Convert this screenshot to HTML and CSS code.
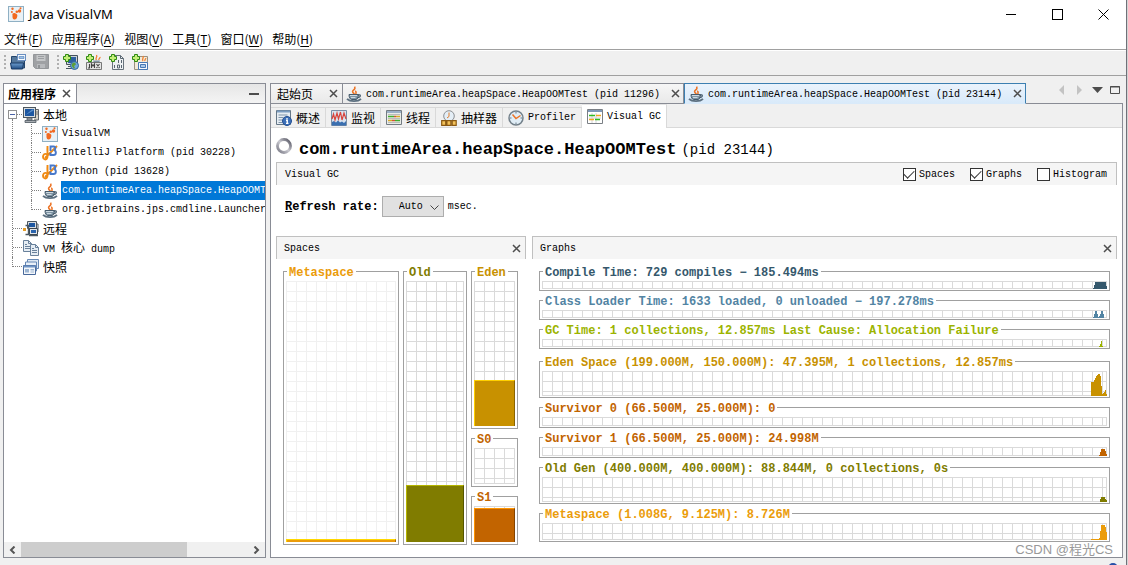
FILE: index.html
```html
<!DOCTYPE html>
<html lang="zh-CN">
<head>
<meta charset="utf-8">
<title>Java VisualVM</title>
<link rel="stylesheet" href="styles.css">
</head>
<body>
<svg class="defs" aria-hidden="true">
  <defs>
    <linearGradient id="g-blue" x1="0" y1="0" x2="0" y2="1"><stop offset="0" stop-color="#6f9fd0"/><stop offset="1" stop-color="#1f4b82"/></linearGradient>
    <linearGradient id="g-ring" x1="1" y1="0" x2="0" y2="1"><stop offset="0" stop-color="#4f4f5c"/><stop offset=".5" stop-color="#c9c9d0"/><stop offset="1" stop-color="#777783"/></linearGradient>
  </defs>
  <symbol id="i-vm" viewBox="0 0 16 16"><rect x=".5" y=".5" width="15" height="15" fill="#e9f1f6" stroke="#8fb0c4"/><g fill="#f26a21"><path d="M4.500 9.500C4 7.500 5.500 6.800 7 7.200c2 .3 2.800 1.800 2.200 3.600-.2 1.800-1.500 3-3 2.700-1.800-.3-1.800-2.200-1.700-4z"/><circle cx="4.500" cy="2.800" r="1.200"/><circle cx="3.900" cy="6" r="1"/><circle cx="8.800" cy="5.800" r="1.300"/><circle cx="11.500" cy="5" r="1.700"/><circle cx="12.500" cy="2.300" r="1"/></g></symbol>
  <symbol id="i-java" viewBox="0 0 16 16"><path d="M8.500 8C5 5.500 7 4.500 8.500 3.200 9.200 2.500 9 1.500 8.600.6M9.500 8c1.800-1.500-.5-2 .5-3.300" fill="none" stroke="#ec7426" stroke-width="1.600"/><path d="M3 8.500h9.500c0 3-1 4.500-2.500 5H5.500c-1.500-.5-2.500-2-2.500-5z" fill="#7f94a4" stroke="#465b6c"/><path d="M4 9.500h7M5 11.500h4.500" stroke="#cbd8e0"/><path d="M12 9c3-1 3.500 2-.8 3" fill="none" stroke="#465b6c" stroke-width="1.200"/><path d="M1 12.800c3 3 11 3 14 0" fill="none" stroke="#5c7080" stroke-width="1.800"/></symbol>
  <symbol id="i-jb" viewBox="0 0 16 16"><path d="M5.500 1v8M5.500 9.500c-3-1.500-4.500 0-4.500 2.500s3.500 3.500 4.300.8S5 6 5.500 2M3 13L15 1" fill="none" stroke="#f08a12" stroke-width="1.900"/><path d="M8.500 6V1.500h3c2.500 0 2.500 3.300.3 3.600 2.800.4 2.800 4.900-.3 4.900H8.500V7.500" fill="none" stroke="#4778ca" stroke-width="1.900"/></symbol>
  <symbol id="i-pc" viewBox="0 0 16 16"><path d="M10 2.500h5.500v10.500H11" fill="#d8d3c8" stroke="#62676c"/><path d="M12.500 5H15M12.500 7H15" stroke="#777"/><rect x=".5" y=".5" width="12" height="10" fill="#d8dcdf" stroke="#4c5760"/><rect x="2" y="2" width="9" height="7" fill="#1d57a1"/><path d="M2.500 8L9 2.500h1.500v1z" fill="#5f92cb"/><path d="M4 11h5v2H4zM2 13.500h11v2H2z" fill="#a8adb2" stroke="#4c5760" stroke-width=".8"/></symbol>
  <symbol id="i-remote" viewBox="0 0 16 16"><path d="M4.500.5h9v7h-9z" fill="#d8dcdf" stroke="#4c5760"/><path d="M6 2h6v4H6z" fill="#1d57a1"/><path d="M6.500 7.500h8v6h-8z" fill="#e3e5e7" stroke="#39444e"/><path d="M8 9h5v3H8z" fill="#2a64ad"/><path d="M2.500 4.500h3v9h-3M6 14.500h9" fill="none" stroke="#4c5760" stroke-width="1.400"/><path d="M0 7h3v3H0z" fill="#e59d2a"/><path d="M13 3h2v8" fill="none" stroke="#4c5760"/></symbol>
  <symbol id="i-dump" viewBox="0 0 16 16"><path d="M.5.5h5l3 3v8h-8z" fill="#e6edf4" stroke="#69819b"/><path d="M5.500.500v3h3M2 4.500h2M2 6.500h5M2 8.500h5" fill="none" stroke="#69819b"/><path d="M7.500 4.500h5l3 3v8h-8z" fill="#e6edf4" stroke="#69819b"/><path d="M12.500 4.500v3h3M9 8.500h2M9 10.500h5M9 12.500h5" fill="none" stroke="#69819b"/></symbol>
  <symbol id="i-snap" viewBox="0 0 16 16"><path d="M4.500.5h11v9h-11z" fill="#dfe9f4" stroke="#6688b5"/><path d="M2.500 3h11v9h-11z" fill="#e9f0f8" stroke="#6688b5"/><path d="M.5 6.500h12v9H.5z" fill="#f4f7fb" stroke="#49699b"/><path d="M.5 7.500h12" stroke="#6f94c5" stroke-width="2"/><path d="M2 10h4v3.500H2zM7.500 10h3.500v1.500H7.500zM7.500 12.500H11v1H7.500z" fill="#9cb5d2"/></symbol>
  <symbol id="i-plus" viewBox="0 0 16 16"><path d="M2.500.5h3v2h2v3h-2v2h-3v-2h-2v-3h2z" fill="#c4ee78" stroke="#2e8a12"/></symbol>
  <symbol id="i-open" viewBox="0 0 16 16"><path d="M1.500 14V2.500h5l1 2h7V14z" fill="#55789c" stroke="#24456b"/><rect x="7.500" y=".5" width="8" height="6" fill="#f7fafd" stroke="#6a8ec0"/><path d="M9 2.500h5v2H9z" fill="#9cc0e8" stroke="#4778b4" stroke-width=".6"/><path d="M.5 9h13l-1 6H1.500z" fill="url(#g-blue)" stroke="#183a66"/></symbol>
  <symbol id="i-save" viewBox="0 0 16 16"><path d="M.5.5h15v14h-13l-2-2z" fill="#9fa1a4" stroke="#94979a"/><path d="M3.500 1h9v6h-9z" fill="#c5c7c9"/><path d="M5 2.500h6M5 4.500h6" stroke="#9b9ea1"/><path d="M4 10h8v4H4z" fill="#b8babd"/><path d="M5 11h2v3H5z" fill="#909396"/></symbol>
  <symbol id="i-addhost" viewBox="0 0 16 16"><path d="M3.500 1.500h11v9h-11zM5 12.500h6M3 14.500h7" fill="#cdd3d8" stroke="#45525d"/><path d="M5 3h8v6H5z" fill="#2c5f9f"/><circle cx="11.500" cy="11.500" r="4" fill="#6fa5da" stroke="#30639b"/><path d="M9.500 9l2.500-.5 1 2-2 1.500 1 2-1 .7-2.500-3z" fill="#5d9e39"/><use href="#i-plus"/></symbol>
  <symbol id="i-addjmx" viewBox="0 0 16 16"><path d="M10.500 6c-2-2 1.500-2.500 0-5M13 6c-1-1.500 1.500-1.500 1-3" fill="none" stroke="#ef8132" stroke-width="1.300"/><path d="M7 6.500h7c0 3-7 3-7 0z" fill="#8095a5"/><path d="M.5 8.500h15v7H.5z" fill="#e4e4e4" stroke="#777"/><path d="M3.500 10v4H2M5.500 14v-4l1.500 2 1.500-2v4M10.500 10l3 4M13.500 10l-3 4" fill="none" stroke="#444" stroke-width="1.100"/><use href="#i-plus"/></symbol>
  <symbol id="i-addcore" viewBox="0 0 16 16"><path d="M3.500 1.500h8l3 3v11h-11z" fill="#eef1f3" stroke="#68737c"/><path d="M11.500 1.500v3h3M9.500 6v3M5.500 11v3M12.500 6v3M8.500 11h2v3h-2zM12.500 11v3" fill="none" stroke="#586570"/><use href="#i-plus"/></symbol>
  <symbol id="i-addsnap" viewBox="0 0 16 16"><path d="M2.500 2.500h13v13h-13z" fill="#f2ead9" stroke="#9a9080"/><path d="M11 7c-1.500-2 1-2.500 0-5M13 7c-.8-1.500 1-1.500.7-3" fill="none" stroke="#ef8132" stroke-width="1.300"/><path d="M6.500 8.500h9v7h-9z" fill="#f7fafd" stroke="#4778b4"/><path d="M8.500 10.500h5v3h-5z" fill="#a9c8e9" stroke="#4778b4"/><use href="#i-plus"/></symbol>
  <symbol id="i-over" viewBox="0 0 16 16"><path d="M.5.5h14v14H.5z" fill="#e6ecf2" stroke="#657787"/><path d="M1 1.500h13" stroke="#7b9cc0" stroke-width="2"/><path d="M2.500 5h9M2.500 7.500h5M2.500 10h4M2.500 12.500h4" stroke="#7e94aa"/><circle cx="11" cy="11" r="4.500" fill="#3c6fb8" stroke="#244f91"/><path d="M11 8v1.500M10 10.500h1.300V13M10 13.300h2.500" fill="none" stroke="#fff" stroke-width="1.300"/></symbol>
  <symbol id="i-mon" viewBox="0 0 16 16"><path d="M.5.500h15v15H.5z" fill="#d8e3ef" stroke="#7b8fa6"/><path d="M1 15.500V12l2-1 2 1.500 2-2 2 2 2-1 2 1.500 2-2v4.500z" fill="#3a6fb0"/><path d="M1 9l1.500-5L4 10l2-7 1.500 6 2-7 1.500 8 2-7L15 9" fill="none" stroke="#d9443c" stroke-width="1.200"/></symbol>
  <symbol id="i-thr" viewBox="0 0 16 16"><path d="M.5.500h15v14H.5z" fill="#e9ece8" stroke="#737b82"/><path d="M1 2h14" stroke="#9bb0c7" stroke-width="2"/><path d="M2 4.500h12M2 8.500h12M2 12.500h12" stroke="#bbb"/><path d="M2 6.500h6M9 10.500h5" stroke="#43ad2d" stroke-width="1.500"/><path d="M10 6.500h4M2 10.500h4" stroke="#d9aa28" stroke-width="1.500"/><path d="M8 6.500h2M6 10.500h3" stroke="#d35235" stroke-width="1.500"/></symbol>
  <symbol id="i-samp" viewBox="0 0 16 16"><circle cx="8" cy="6" r="5.300" fill="#e4eef6" stroke="#8c8f93"/><path d="M8 2.500V6.500L6 8" fill="none" stroke="#e27a27"/><path d="M.7 10.700h4v4.600h-4zM5.900 10.700h4v4.600h-4zM11.200 10.700h4v4.600h-4z" fill="#f3c25a" stroke="#8b5a12" stroke-width="1.200"/></symbol>
  <symbol id="i-prof" viewBox="0 0 16 16"><circle cx="8" cy="8" r="7" fill="#e0edf6" stroke="#73808a" stroke-width="1.500"/><path d="M8 2v1.500M8 12.500V14M2 8h1.500M12.500 8H14" stroke="#677887"/><path d="M4.500 4.500l3.500 4 4.500-3" fill="none" stroke="#ec7426" stroke-width="1.500"/></symbol>
  <symbol id="i-gc" viewBox="0 0 16 16"><path d="M.5.500h15v14H.5z" fill="#fff" stroke="#7a7f85"/><path d="M1 2h14" stroke="#7e98b7" stroke-width="2"/><path d="M2 9h12M5 4v10M9 4v10" stroke="#d4d4d4"/><path d="M2 6.500h6M8 10.500h5" stroke="#30bb20" stroke-width="1.600"/><path d="M9 6.500h5M2 10.500h5" stroke="#f0a61f" stroke-width="1.600"/></symbol>
  <symbol id="i-x" viewBox="0 0 9 9"><path d="M1 1l7 7M8 1L1 8" fill="none" stroke="#4d4d4d" stroke-width="1.500"/></symbol>
</svg>

<div class="window">
  <header class="titlebar">
    <svg class="icon"><use href="#i-vm"/></svg>
    <h1 class="app-name">Java VisualVM</h1>
    <div class="win-controls">
      <button aria-label="Minimize"><svg width="11" height="11"><path d="M0 5.500h10" stroke="#000"/></svg></button>
      <button aria-label="Maximize"><svg width="11" height="11"><rect x=".5" y=".5" width="10" height="10" fill="none" stroke="#000"/></svg></button>
      <button aria-label="Close"><svg width="11" height="11"><path d="M.5.500l10 10M10.500.500l-10 10" stroke="#000"/></svg></button>
    </div>
  </header>

  <nav class="menubar">
    <button>文件(<u>F</u>)</button><button>应用程序(<u>A</u>)</button><button>视图(<u>V</u>)</button><button>工具(<u>T</u>)</button><button>窗口(<u>W</u>)</button><button>帮助(<u>H</u>)</button>
  </nav>

  <div class="toolbar">
    <span class="grip"></span>
    <button aria-label="Open"><svg class="icon"><use href="#i-open"/></svg></button>
    <button aria-label="Save" disabled><svg class="icon"><use href="#i-save"/></svg></button>
    <span class="grip second"></span>
    <button aria-label="Add remote host"><svg class="icon"><use href="#i-addhost"/></svg></button>
    <button aria-label="Add JMX connection"><svg class="icon"><use href="#i-addjmx"/></svg></button>
    <button aria-label="Add core dump"><svg class="icon"><use href="#i-addcore"/></svg></button>
    <button aria-label="Add snapshot"><svg class="icon"><use href="#i-addsnap"/></svg></button>
  </div>

  <div class="workspace">
    <aside class="sidebar">
      <div class="side-head">
        <div class="side-tab"><strong class="zh">应用程序</strong><button aria-label="Close"><svg width="9" height="9"><use href="#i-x"/></svg></button></div>
        <button class="collapse" aria-label="Collapse"><svg width="10" height="2"><path d="M0 1h10" stroke="#4d4d4d" stroke-width="2"/></svg></button>
      </div>
      <ul class="tree">
        <li><button class="expander" aria-label="Collapse node"></button><div class="node"><svg class="icon"><use href="#i-pc"/></svg><span class="zh">本地</span></div>
          <ul>
            <li><div class="node"><svg class="icon"><use href="#i-vm"/></svg><span>VisualVM</span></div></li>
            <li><div class="node"><svg class="icon"><use href="#i-jb"/></svg><span>IntelliJ Platform (pid 30228)</span></div></li>
            <li><div class="node"><svg class="icon"><use href="#i-jb"/></svg><span>Python (pid 13628)</span></div></li>
            <li><div class="node selected"><svg class="icon"><use href="#i-java"/></svg><span>com.runtimeArea.heapSpace.HeapOOMTest</span></div></li>
            <li><div class="node"><svg class="icon"><use href="#i-java"/></svg><span>org.jetbrains.jps.cmdline.Launcher</span></div></li>
          </ul>
        </li>
        <li><div class="node"><svg class="icon"><use href="#i-remote"/></svg><span class="zh">远程</span></div></li>
        <li><div class="node"><svg class="icon"><use href="#i-dump"/></svg><span>VM <span class="zh">核心</span> dump</span></div></li>
        <li><div class="node"><svg class="icon"><use href="#i-snap"/></svg><span class="zh">快照</span></div></li>
      </ul>
      <div class="scrollbar">
        <button aria-label="Scroll left"><svg width="7" height="8"><path d="M5.500.500L2 4l3.500 3.500" fill="none" stroke="#555" stroke-width="2"/></svg></button>
        <div class="track"><div class="thumb"></div></div>
        <button aria-label="Scroll right"><svg width="7" height="8"><path d="M1.500.500L5 4 1.500 7.500" fill="none" stroke="#555" stroke-width="2"/></svg></button>
      </div>
    </aside>

    <main class="editor">
      <div class="doc-tabs">
        <div class="doc-tab start"><span class="zh">起始页</span><button aria-label="Close"><svg width="9" height="9"><use href="#i-x"/></svg></button></div>
        <div class="doc-tab"><svg class="icon"><use href="#i-java"/></svg><span class="name">com.runtimeArea.heapSpace.HeapOOMTest (pid 11296)</span><button aria-label="Close"><svg width="9" height="9"><use href="#i-x"/></svg></button></div>
        <div class="doc-tab active"><svg class="icon"><use href="#i-java"/></svg><span class="name">com.runtimeArea.heapSpace.HeapOOMTest (pid 23144)</span><button aria-label="Close"><svg width="9" height="9"><use href="#i-x"/></svg></button></div>
        <div class="tab-tools">
          <button aria-label="Previous"><svg width="11" height="10"><path d="M8 0v10L3 5z" fill="#c3c3c3"/></svg></button>
          <button aria-label="Next"><svg width="11" height="10"><path d="M3 0v10l5-5z" fill="#c3c3c3"/></svg></button>
          <button aria-label="List"><svg width="11" height="10"><path d="M0 2h11L5.500 8z" fill="#4d4d4d"/></svg></button>
          <button aria-label="Maximize"><svg width="11" height="10"><path d="M.5 1.500h9v7h-9zM0 2h10" fill="none" stroke="#4d4d4d"/></svg></button>
        </div>
      </div>

      <div class="document">
        <div class="view-tabs">
          <button class="zh"><svg class="icon"><use href="#i-over"/></svg>概述</button>
          <button class="zh"><svg class="icon"><use href="#i-mon"/></svg>监视</button>
          <button class="zh"><svg class="icon"><use href="#i-thr"/></svg>线程</button>
          <button class="zh"><svg class="icon"><use href="#i-samp"/></svg>抽样器</button>
          <button><svg class="icon"><use href="#i-prof"/></svg>Profiler</button>
          <button class="current"><svg class="icon"><use href="#i-gc"/></svg>Visual GC</button>
        </div>

        <div class="page">
          <div class="page-title">
            <svg width="16" height="16" viewBox="0 0 16 16"><circle cx="8" cy="8" r="6.500" fill="none" stroke="url(#g-ring)" stroke-width="2.800"/></svg>
            <h2>com.runtimeArea.heapSpace.HeapOOMTest</h2><span>(pid 23144)</span>
          </div>

          <div class="band">
            <span>Visual GC</span>
            <div class="toggles">
              <label><input type="checkbox" checked>Spaces</label>
              <label><input type="checkbox" checked>Graphs</label>
              <label><input type="checkbox">Histogram</label>
            </div>
          </div>

          <div class="refresh">
            <label for="rate"><u>R</u>efresh rate:</label>
            <div class="combo"><select id="rate"><option>Auto</option></select><svg width="9" height="6"><path d="M.5.500l4 4 4-4" fill="none" stroke="#444"/></svg></div>
            <span>msec.</span>
          </div>

          <div class="panels">
            <section class="panel spaces">
              <div class="band"><span>Spaces</span><button aria-label="Close"><svg width="9" height="9"><use href="#i-x"/></svg></button></div>
              <div class="spaces-body">
                <div class="box metaspace light"><h3>Metaspace</h3><div class="mesh"><div class="fill" style="height:1%"></div></div></div>
                <div class="box old"><h3>Old</h3><div class="mesh"><div class="fill" style="height:22%"></div></div></div>
                <div class="young">
                  <div class="box eden"><h3>Eden</h3><div class="mesh"><div class="fill" style="height:32%"></div></div></div>
                  <div class="box survivor"><h3>S0</h3><div class="mesh"></div></div>
                  <div class="box survivor"><h3>S1</h3><div class="mesh"><div class="fill" style="height:98%"></div></div></div>
                </div>
              </div>
            </section>

            <section class="panel graphs">
              <div class="band"><span>Graphs</span><button aria-label="Close"><svg width="9" height="9"><use href="#i-x"/></svg></button></div>
              <div class="graphs-body">
                <div class="box compile"><h3>Compile Time: 729 compiles − 185.494ms</h3><div class="mesh"><svg width="14" height="7"><path d="M0 7V6h1V3h1V0h11v4h1v3z" fill="currentColor"/></svg></div></div>
                <div class="box loader"><h3>Class Loader Time: 1633 loaded, 0 unloaded − 197.278ms</h3><div class="mesh"><svg width="14" height="7"><path d="M0 7V6h1V3h1V0h2v3h1v3h1V5h1V3h1V0h2v3h1v4z" fill="currentColor"/></svg></div></div>
                <div class="box gctime"><h3>GC Time: 1 collections, 12.857ms Last Cause: Allocation Failure</h3><div class="mesh"><svg width="8" height="7"><path d="M0 7V6h1V4h1V1h1v5h1v1z" fill="currentColor"/></svg></div></div>
                <div class="box eden"><h3>Eden Space (199.000M, 150.000M): 47.395M, 1 collections, 12.857ms</h3><div class="mesh"><svg width="16" height="22"><path d="M0 22V8h3V6h1V4h1V2h1V1h1V0h2v2h1v10h1v8h1v-1h1v-1h1v-2h1v4h1v2z" fill="currentColor"/></svg></div></div>
                <div class="box survivor"><h3>Survivor 0 (66.500M, 25.000M): 0</h3><div class="mesh"></div></div>
                <div class="box survivor"><h3>Survivor 1 (66.500M, 25.000M): 24.998M</h3><div class="mesh"><svg width="8" height="7"><path d="M0 7V6h1V3h1V0h4v2h1v3h1v2z" fill="currentColor"/></svg></div></div>
                <div class="box old"><h3>Old Gen (400.000M, 400.000M): 88.844M, 0 collections, 0s</h3><div class="mesh"><svg width="7" height="5"><path d="M0 5V2h1V0h4v2h1v1h1v2z" fill="currentColor"/></svg></div></div>
                <div class="box metaspace"><h3>Metaspace (1.008G, 9.125M): 8.726M</h3><div class="mesh"><svg width="16" height="15"><path d="M0 15v-1h8v-1h1V6h1V0h4v2h1v5h1v8z" fill="currentColor"/></svg></div></div>
              </div>
            </section>
          </div>
        </div>
      </div>
      <div class="watermark">CSDN @程光CS</div>
    </main>
  </div>
  <footer class="status"><svg width="10" height="2" viewBox="0 0 10 2"><circle cx="5" cy="5" r="4" fill="#6d9de0" stroke="#2750a8" stroke-width="2"/></svg></footer>
</div>
</body>
</html>
```
FILE: styles.css
```css
* { box-sizing: border-box; }

body {
  margin: 0;
  background: #d4d4d4;
  color: #000;
  font: 10px/14px "Liberation Mono", "Noto Sans CJK SC", monospace;
}

h1, h2, h3, ul { margin: 0; padding: 0; font: inherit; }
ul { list-style: none; }
svg { display: block; flex: none; }
button { padding: 0; border: 0; background: none; color: inherit; font: inherit; }

.defs { position: absolute; width: 0; height: 0; }
.icon { width: 16px; height: 16px; }
.zh { font: 12px/16px "Noto Sans CJK SC", sans-serif; }

.window {
  display: flex;
  flex-direction: column;
  min-height: 100vh;
  margin-right: 1px;
  border-right: 1px solid #707078;
  background: #f0f0f0;
}

/* Title bar and menu */
.titlebar { display: flex; align-items: center; height: 28px; padding-left: 8px; background: #fff; }
.app-name { margin-left: 5px; font: 13px/18px "Noto Sans", sans-serif; }
.win-controls { display: flex; align-self: stretch; margin-left: auto; }
.win-controls button { display: grid; place-items: center; width: 46px; }

.menubar {
  display: flex;
  gap: 9px;
  height: 22px;
  padding-left: 4px;
  border-bottom: 1px solid #a0a0a0;
  background: #fff;
  font: 12px/22px "Noto Sans CJK SC", sans-serif;
}
.menubar u { text-underline-offset: 2px; }

.toolbar {
  display: flex;
  align-items: center;
  gap: 7px;
  height: 26px;
  padding: 0 4px 2px;
  border-top: 1px solid #fff;
  border-bottom: 1px solid #a0a0a0;
}
.grip {
  width: 2px;
  height: 14px;
  margin-right: -3px;
  background: repeating-linear-gradient(#b0b0b0 0 2px, transparent 2px 4px);
}
.grip.second { margin-left: 1px; }

.workspace { display: flex; flex: 1; gap: 4px; padding: 7px 3px 0; min-height: 0; }

/* Applications tree */
.sidebar {
  display: flex;
  flex: 0 0 263px;
  flex-direction: column;
  min-width: 0;
  border: 1px solid #898c95;
  background: #fff;
}
.side-head {
  display: flex;
  justify-content: space-between;
  height: 20px;
  border-bottom: 1px solid #898c95;
  background: linear-gradient(#e6e6e6, #f4f4f4);
}
.side-tab {
  display: flex;
  align-items: center;
  gap: 6px;
  padding: 0 5px 0 4px;
  border-right: 1px solid #898c95;
  background: #fff;
}
.side-tab strong { font-weight: 700; }
.collapse { margin-right: 6px; }

.tree { flex: 1; padding-top: 1px; overflow: hidden; white-space: nowrap; }
.tree li { position: relative; padding-left: 19px; }
.tree li::before {
  content: "";
  position: absolute;
  top: 9px;
  left: 9px;
  width: 9px;
  border-top: 1px dotted #808080;
}
.tree li::after {
  content: "";
  position: absolute;
  top: 0;
  bottom: 0;
  left: 8px;
  border-left: 1px dotted #808080;
}
.tree > li:first-child::after { top: 14px; }
.tree li:last-child::after { bottom: 9px; }
.expander {
  position: absolute;
  z-index: 1;
  top: 5px;
  left: 4px;
  width: 9px;
  height: 9px;
  border: 1px solid #919191;
  background: linear-gradient(#4b63a7, #4b63a7) center / 5px 1px no-repeat #fff;
}
.node { display: flex; align-items: center; gap: 3px; height: 19px; }
.node > span { padding: 0 1px; }
.node.selected > span { flex: 1; background: #0078d7; color: #fff; line-height: 19px; }

.scrollbar { display: flex; height: 15px; background: #f0f0f0; }
.scrollbar button { display: grid; place-items: center; width: 17px; }
.track { flex: 1; }
.thumb { width: 73%; height: 100%; background: #cdcdcd; }

/* Editor area */
.editor { position: relative; display: flex; flex: 1; flex-direction: column; min-width: 0; }
.doc-tabs { display: flex; height: 21px; }
.doc-tab {
  display: flex;
  align-items: center;
  gap: 4px;
  padding: 0 3px;
  border: solid #898c95;
  border-width: 1px 1px 1px 0;
  background: linear-gradient(#f6f6f6, #e9e9e9);
  white-space: nowrap;
}
.doc-tab.start { padding: 0 4px 0 6px; border-left-width: 1px; }
.doc-tab .name { padding-top: 2px; }
.doc-tab button { margin-left: 7px; }
.doc-tab.start button { margin-left: 12px; }
.doc-tab.active {
  border: 1px solid #3c7fb1;
  border-bottom-color: #d9eafa;
  background: linear-gradient(#eaf3fc, #d9eafa);
}
.tab-tools {
  display: flex;
  flex: 1;
  align-items: center;
  justify-content: flex-end;
  gap: 7px;
  padding: 0 2px 7px;
  border-bottom: 1px solid #898c95;
}

.document {
  display: flex;
  flex: 1;
  flex-direction: column;
  border: 1px solid #898c95;
  border-top: 0;
  background: #fff;
}
.view-tabs {
  display: flex;
  align-items: flex-end;
  height: 24px;
  border-bottom: 1px solid #d9d9d9;
  background: #f0f0f0;
}
.view-tabs button {
  display: flex;
  align-items: center;
  gap: 4px;
  height: 20px;
  padding: 1px 5px 0;
  border: solid #d9d9d9;
  border-width: 1px 1px 0 0;
}
.view-tabs .current {
  height: 24px;
  margin-bottom: -1px;
  border-top-color: #e4e4e4;
  background: #fff;
}

.page { display: flex; flex: 1; flex-direction: column; padding: 0 5px 12px; }
.page-title { display: flex; align-items: center; height: 34px; padding-top: 10px; white-space: nowrap; }
.page-title svg { margin: 0 7px 8px 0; }
.page-title h2 { font-size: 17px; font-weight: 700; line-height: 22px; }
.page-title span { margin-left: 5px; font-size: 14px; line-height: 22px; }

.band {
  display: flex;
  align-items: center;
  justify-content: space-between;
  height: 23px;
  padding: 1px 9px 0 8px;
  border: solid #c0c0c0;
  border-width: 1px 1px 0;
  background: #f5f5f5;
}
.panel .band { padding: 1px 4px 0 7px; }

.toggles { display: flex; gap: 15px; }
.toggles label { display: flex; align-items: center; gap: 3px; }
.toggles input {
  appearance: none;
  display: grid;
  place-items: center;
  width: 13px;
  height: 13px;
  margin: 0;
  border: 1px solid #333;
  background: #fff;
}
.toggles input:checked::after {
  content: "";
  width: 9px;
  height: 5px;
  margin-bottom: 3px;
  border: solid #333;
  border-width: 0 0 1px 1px;
  transform: rotate(-45deg);
}

.refresh { display: flex; align-items: center; height: 51px; padding: 0 9px 8px; }
.refresh label { font-size: 12px; font-weight: 700; }
.combo { position: relative; margin: 0 4px 0 3px; }
.combo select {
  appearance: none;
  width: 62px;
  height: 21px;
  padding: 0 16px;
  border: 1px solid #adadad;
  border-radius: 0;
  background: #e1e1e1;
  color: #000;
  font: inherit;
}
.combo svg { position: absolute; top: 9px; right: 5px; pointer-events: none; }

/* Visual GC panels */
.panels { display: flex; flex: 1; gap: 6px; }
.panel { display: flex; flex-direction: column; }
.spaces { flex: 0 0 250px; }
.graphs { flex: 1; min-width: 0; }

.spaces-body {
  display: grid;
  flex: 1;
  grid-template-columns: 116fr 64fr 47fr;
  gap: 4px;
  padding: 12px 8px 0 7px;
}
.young { display: grid; grid-template-rows: 157fr 49fr 49fr; gap: 9px; }

.graphs-body {
  display: grid;
  flex: 1;
  grid-template-rows: 20fr 20fr 20fr 40fr 21fr 21fr 37fr 29fr;
  gap: 9px;
  padding: 12px 7px 3px;
}
.graphs-body .eden { margin-top: 3px; }

.box { position: relative; display: flex; min-width: 0; padding: 9px 2px 1px; border: 1px solid #a0a0a0; }
.box h3 {
  position: absolute;
  top: -7px;
  left: 3px;
  padding: 1px 2px 0;
  background: #fff;
  font-size: 12px;
  font-weight: 700;
  line-height: 14px;
  white-space: nowrap;
}
.spaces-body .box { padding: 9px 2px 2px; }
.mesh {
  --line: #dadada;
  display: flex;
  flex: 1;
  align-items: flex-end;
  justify-content: flex-end;
  border: solid var(--line);
  border-width: 0 1px 1px 0;
  background:
    repeating-linear-gradient(to right, var(--line) 0 1px, transparent 1px 10px),
    repeating-linear-gradient(to bottom, var(--line) 0 1px, transparent 1px 10px);
}
.light .mesh { --line: #f0f0f0; }
.mesh svg { margin: 0 -1px -1px 0; }
.fill {
  flex: 1;
  min-height: 2px;
  margin: 0 -1px -1px 0;
  border: solid var(--edge);
  border-width: 1px 1px 0 1px;
  border-right-color: var(--shade);
  background: currentColor;
}

.metaspace { --edge: #ffd800; --shade: #a86e00; color: #eb9c0a; }
.old { --edge: #b5b500; --shade: #555500; color: #807c00; }
.eden { --edge: #ffd000; --shade: #8a6400; color: #c89100; }
.survivor { --edge: #ff9400; --shade: #854400; color: #c26400; }
.compile { color: #35586c; }
.loader { color: #5284a3; }
.gctime { color: #9cb400; }

.watermark {
  position: absolute;
  right: 10px;
  bottom: 0;
  color: #999;
  font: 13px/17px "Liberation Sans", "Noto Sans CJK SC", sans-serif;
}

.status { display: flex; align-items: flex-end; justify-content: flex-end; height: 7px; padding-right: 8px; }
```
